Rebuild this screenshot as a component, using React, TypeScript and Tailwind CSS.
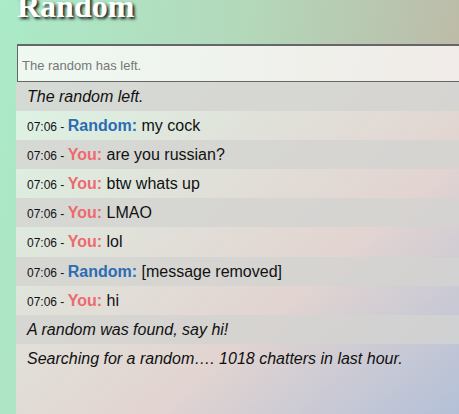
import React from "react";

type Msg =
  | { kind: "sys"; text: string }
  | { kind: "chat"; who: "Random" | "You"; text: string };

const msgs: Msg[] = [
  { kind: "sys", text: "The random left." },
  { kind: "chat", who: "Random", text: "my cock" },
  { kind: "chat", who: "You", text: "are you russian?" },
  { kind: "chat", who: "You", text: "btw whats up" },
  { kind: "chat", who: "You", text: "LMAO" },
  { kind: "chat", who: "You", text: "lol" },
  { kind: "chat", who: "Random", text: "[message removed]" },
  { kind: "chat", who: "You", text: "hi" },
  { kind: "sys", text: "A random was found, say hi!" },
  { kind: "sys", text: "Searching for a random…. 1018 chatters in last hour." },
];

export default function App() {
  return (
    <div className="h-[414px] w-full overflow-hidden bg-[linear-gradient(100deg,#abebc8_0%,#b3d9bb_45%,#bfb3a3_100%)] font-['Liberation_Sans',Arial,sans-serif] flex flex-col">
      <h1 className="ml-[17px] -mt-[10px] font-['Liberation_Serif','Times_New_Roman',serif] text-[32px] leading-[32px] font-bold text-white [text-shadow:2px_2px_3px_#1a1a1a]">
        Random
      </h1>
      <div className="ml-[16px] mt-[22px] flex flex-1 flex-col">
        <div className="ml-[1px] flex h-[38px] w-[460px] items-end border border-t-2 border-[#666] bg-[linear-gradient(100deg,#eef9f1_0%,#f1ebe8_100%)] pb-[6px] pl-[4px] text-[13px] text-[#777]">
          The random has left.
        </div>
        <div className="flex w-[460px] flex-1 flex-col bg-[linear-gradient(140deg,#dcf5e5_0%,#e1ded8_40%,#e2d4d1_62%,#b1bfd8_100%)]">
          {msgs.map((m, i) => (
            <div
              key={i}
              className={`flex items-center pl-[11px] ${
                i === 5 ? "h-[30px]" : "h-[29px]"
              } ${i % 2 === 0 ? "bg-[#d3d3d1]/80" : ""}`}
            >
              {m.kind === "sys" ? (
                <span className="text-[16px] italic text-[#111]">{m.text}</span>
              ) : (
                <span className="text-[16px] text-[#111] whitespace-nowrap">
                  <span className="text-[12px]">07:06 - </span>
                  <span
                    className={`font-bold ${
                      m.who === "Random" ? "text-[#2b6cb3]" : "text-[#ee6a6d]"
                    }`}
                  >
                    {m.who}:
                  </span>{" "}
                  {m.text}
                </span>
              )}
            </div>
          ))}
        </div>
      </div>
    </div>
  );
}
